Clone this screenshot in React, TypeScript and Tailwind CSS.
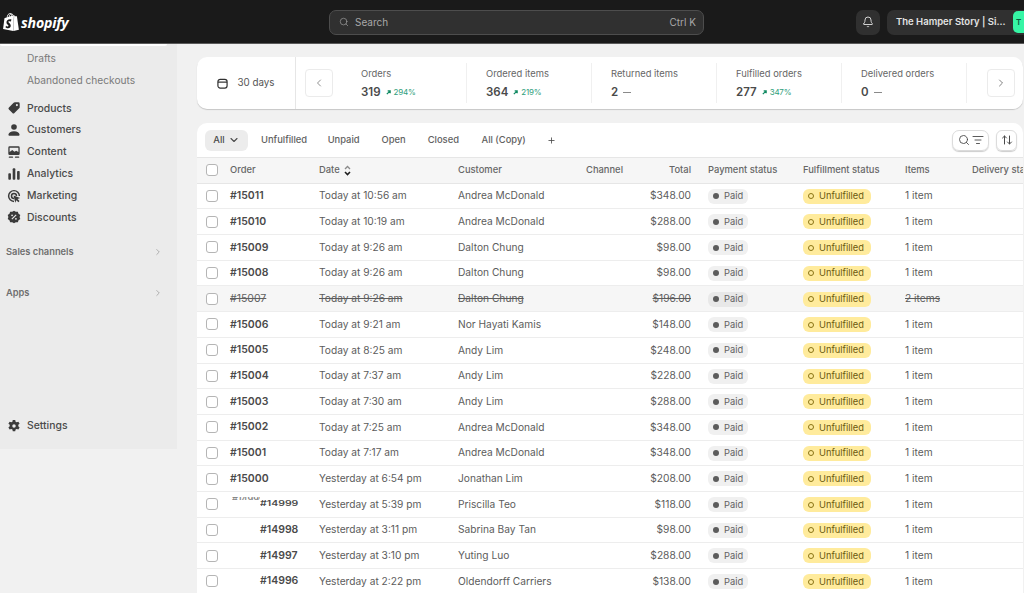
import { ArrowUpDown, Bell, ChevronDown, ChevronLeft, ChevronRight, ListFilter, Plus, Search } from "lucide-react";
import { SiShopify } from "react-icons/si";
import type { ReactNode } from "react";

const orders = [
  { id: "#15011", date: "Today at 10:56 am", customer: "Andrea McDonald", total: "$348.00", items: "1 item" },
  { id: "#15010", date: "Today at 10:19 am", customer: "Andrea McDonald", total: "$288.00", items: "1 item" },
  { id: "#15009", date: "Today at 9:26 am", customer: "Dalton Chung", total: "$98.00", items: "1 item" },
  { id: "#15008", date: "Today at 9:26 am", customer: "Dalton Chung", total: "$98.00", items: "1 item" },
  { id: "#15007", date: "Today at 9:26 am", customer: "Dalton Chung", total: "$196.00", items: "2 items", voided: true },
  { id: "#15006", date: "Today at 9:21 am", customer: "Nor Hayati Kamis", total: "$148.00", items: "1 item" },
  { id: "#15005", date: "Today at 8:25 am", customer: "Andy Lim", total: "$248.00", items: "1 item" },
  { id: "#15004", date: "Today at 7:37 am", customer: "Andy Lim", total: "$228.00", items: "1 item" },
  { id: "#15003", date: "Today at 7:30 am", customer: "Andy Lim", total: "$288.00", items: "1 item" },
  { id: "#15002", date: "Today at 7:25 am", customer: "Andrea McDonald", total: "$348.00", items: "1 item" },
  { id: "#15001", date: "Today at 7:17 am", customer: "Andrea McDonald", total: "$348.00", items: "1 item" },
  { id: "#15000", date: "Yesterday at 6:54 pm", customer: "Jonathan Lim", total: "$208.00", items: "1 item" },
  { id: "#14999", date: "Yesterday at 5:39 pm", customer: "Priscilla Teo", total: "$118.00", items: "1 item", shifted: true, glitch: true },
  { id: "#14998", date: "Yesterday at 3:11 pm", customer: "Sabrina Bay Tan", total: "$98.00", items: "1 item", shifted: true },
  { id: "#14997", date: "Yesterday at 3:10 pm", customer: "Yuting Luo", total: "$288.00", items: "1 item", shifted: true },
  { id: "#14996", date: "Yesterday at 2:22 pm", customer: "Oldendorff Carriers", total: "$138.00", items: "1 item", shifted: true },
];

const stats = [
  { label: "Orders", value: "319", delta: "294%" },
  { label: "Ordered items", value: "364", delta: "219%" },
  { label: "Returned items", value: "2" },
  { label: "Fulfilled orders", value: "277", delta: "347%" },
  { label: "Delivered orders", value: "0" },
];

const iconProps = { width: 14, height: 14, viewBox: "0 0 16 16", fill: "#3b3b3b" };

const navIcons: Record<string, ReactNode> = {
  Products: (
    <svg {...iconProps}>
      <path d="M9 1.5h4a1.5 1.5 0 0 1 1.5 1.5v4a2 2 0 0 1-.6 1.4l-5.4 5.4a1.6 1.6 0 0 1-2.3 0L2.200 9.800a1.600 1.600 0 0 1 0-2.300l5.400-5.400A2 2 0 0 1 9 1.500zm2.300 2a1.200 1.200 0 1 0 0 2.400 1.200 1.200 0 0 0 0-2.400z" fillRule="evenodd" />
    </svg>
  ),
  Customers: (
    <svg {...iconProps}>
      <circle cx="8" cy="4.500" r="3.200" />
      <path d="M2.500 14.500c-.600 0-1-.500-.9-1 .4-2.500 2.700-4 6.400-4s6 1.500 6.400 4c.1.500-.3 1-.9 1z" />
    </svg>
  ),
  Content: (
    <svg {...iconProps}>
      <path d="M3 1.500h10A1.500 1.500 0 0 1 14.500 3v7a1.500 1.500 0 0 1-1.500 1.500H3A1.500 1.500 0 0 1 1.500 10V3A1.500 1.500 0 0 1 3 1.500zm0 1.500v5l3-2.200 2.500 2 2-1.300 2.500 1.500V3z" fillRule="evenodd" />
      <rect x="2" y="13" width="5" height="1.700" rx=".8" />
      <rect x="9" y="13" width="5" height="1.700" rx=".8" />
    </svg>
  ),
  Analytics: (
    <svg {...iconProps}>
      <rect x="1.500" y="7" width="3" height="7.500" rx="1" />
      <rect x="6.500" y="1.500" width="3" height="13" rx="1" />
      <rect x="11.500" y="4.500" width="3" height="10" rx="1" />
    </svg>
  ),
  Marketing: (
    <svg {...iconProps}>
      <path d="M8 1a7 7 0 0 1 7 7h-1.700A5.300 5.300 0 1 0 8 13.300V15A7 7 0 0 1 8 1z" />
      <path d="M8 4.300A3.700 3.700 0 0 1 11.700 8H10a2 2 0 1 0-2 2v1.700A3.700 3.700 0 0 1 8 4.300z" />
      <path d="M7.500 7.500l7.500 2.700-3 1.300 2.300 2.300-1.300 1.300-2.300-2.300-1.300 3z" />
    </svg>
  ),
  Discounts: (
    <svg {...iconProps}>
      <path d="M8 .8l2 1.300 2.400-.2.800 2.300 2 1.400-.8 2.400.8 2.400-2 1.400-.8 2.300-2.400-.2-2 1.300-2-1.300-2.400.2-.8-2.300-2-1.400.8-2.400-.8-2.400 2-1.400.8-2.300 2.400.2z" />
      <path d="M5.500 10.500l5-5" stroke="#ebebeb" strokeWidth="1.300" />
      <circle cx="5.800" cy="6" r="1" fill="#ebebeb" />
      <circle cx="10.200" cy="10" r="1" fill="#ebebeb" />
    </svg>
  ),
  Settings: (
    <svg {...iconProps}>
      <path d="M6.600 1h2.800l.4 2 1.300.7 1.900-.7 1.400 2.400-1.500 1.300v1.600l1.500 1.300-1.400 2.400-1.900-.7-1.300.7-.4 2H6.600l-.4-2-1.300-.7-1.900.7-1.400-2.400 1.500-1.300V6.700L1.600 5.400 3 3l1.900.7L6.200 3zM8 6a2 2 0 1 0 0 4 2 2 0 0 0 0-4z" fillRule="evenodd" />
    </svg>
  ),
};

function NavItem({ label }: { label: string }) {
  return (
    <div className="flex h-[21.800px] items-center">
      <span className="flex w-[27px] shrink-0 justify-center">{navIcons[label]}</span>
      <span className="text-[10.400px] font-medium text-[#4a4a4a]">{label}</span>
    </div>
  );
}

function SectionLink({ label }: { label: string }) {
  return (
    <div className="flex h-[20px] items-center justify-between pl-[6px] pr-[14px]">
      <span className="text-[9.300px] font-semibold text-[#6f6f6f]">{label}</span>
      <ChevronRight size={10} strokeWidth={1.500} className="text-[#8a8a8a]" />
    </div>
  );
}

function Checkbox() {
  return <span className="block h-[12px] w-[12px] rounded-[3px] border border-[#b5b5b5] bg-white" />;
}

function Delta({ value }: { value: string }) {
  return (
    <span className="flex items-center gap-[3px] text-[8px] tracking-[-0.2px] text-[#2f9e7c]">
      <svg width="5" height="5" viewBox="0 0 6 6" fill="none" stroke="#108a62" strokeWidth="1.500">
        <path d="M1 5l4-4M2 1h3v3" />
      </svg>
      {value}
    </span>
  );
}

const rowGrid = "grid h-[25.700px] grid-cols-[33px_89px_139px_128px_64px_41px_17px_95px_102px_1fr] items-center";

function OrderRow({ order }: { order: (typeof orders)[number] }) {
  const strike = order.voided ? "line-through" : "";
  return (
    <div className={`${rowGrid} border-b border-[#ededed] text-[10.200px] text-[#5c5c5c] ${order.voided ? "bg-[#f6f6f6]" : "bg-white"}`}>
      <span className="pl-[9px]">
        <Checkbox />
      </span>
      <span className={`relative ${order.voided ? "font-normal text-[#616161] line-through" : "font-semibold text-[#4a4a4a]"} ${order.shifted ? "pl-[30px]" : ""} text-[10.500px]`}>
        {order.glitch && (
          <span className="absolute left-[2px] top-[1px] h-[3px] w-[28px] overflow-hidden text-[9px] leading-[3px] text-[#888]">#14999</span>
        )}
        <span className={order.glitch ? "inline-block scale-y-[0.75]" : ""}>{order.id}</span>
      </span>
      <span className={strike}>{order.date}</span>
      <span className={strike}>{order.customer}</span>
      <span />
      <span className={`text-right ${strike}`}>{order.total}</span>
      <span />
      <span>
        <span className={`inline-flex h-[15px] items-center gap-[5px] rounded-[6px] pl-[5px] pr-[5px] text-[9.300px] text-[#616161] ${order.voided ? "bg-[#e8e8e8]" : "bg-[#f0f0f0]"}`}>
          <span className="h-[6px] w-[6px] rounded-full bg-[#5c5c5c]" />
          Paid
        </span>
      </span>
      <span>
        <span className="inline-flex h-[15px] items-center gap-[5px] rounded-[6px] bg-[#ffeb9c] pl-[5px] pr-[7px] text-[9.300px] text-[#6b5a10]">
          <span className="h-[6px] w-[6px] rounded-full border border-[#8a7414]" />
          Unfulfilled
        </span>
      </span>
      <span className={strike}>{order.items}</span>
    </div>
  );
}

export default function App() {
  return (
    <div className="flex h-screen flex-col overflow-hidden bg-[#f1f1f1] font-['Inter',sans-serif]">
      <header className="flex h-[44px] shrink-0 items-center border-b border-[#5a5a5a] bg-[#1a1a1a] pt-[1px]">
        <div className="flex w-[329px] shrink-0 items-center gap-[1px] pl-[2px] pt-[1px] text-white">
          <SiShopify size={18} />
          <span className="font-['Open_Sans',sans-serif] text-[14.200px] font-bold italic tracking-[-0.2px]">shopify</span>
        </div>
        <div className="flex h-[25px] w-[375px] shrink-0 items-center justify-between rounded-[7px] border border-[#4d4d4d] bg-[#303030] pl-[9px] pr-[7px] text-[10px] text-[#a8a8a8]">
          <span className="flex items-center gap-[6px]">
            <Search size={10} strokeWidth={1.500} />
            Search
          </span>
          <span>Ctrl K</span>
        </div>
        <span className="ml-[152px] flex h-[25px] w-[24px] shrink-0 items-center justify-center rounded-[7px] bg-[#303030] text-[#e3e3e3]">
          <Bell size={12} strokeWidth={1.800} />
        </span>
        <div className="ml-[7px] flex h-[25px] flex-1 items-center justify-between overflow-hidden rounded-l-[7px] bg-[#303030] pl-[9px]">
          <span className="whitespace-nowrap text-[9.500px] font-semibold text-[#e3e3e3]">The Hamper Story | Si...</span>
          <span className="flex h-[22px] w-[11px] items-center rounded-l-[5px] bg-[#36f5a5] pl-[3px] text-[8px] font-semibold text-[#0b5c3f]">T</span>
        </div>
      </header>

      <div className="flex min-h-0 flex-1">
        <aside className="flex h-[405px] w-[177px] shrink-0 flex-col bg-[#ebebeb]">
          <div className="h-[2px] w-[167px] rounded-b-[4px] bg-white" />
          <div className="pl-[27px] pt-[2px] text-[10.200px] text-[#7a7a7a]">
            <div className="flex h-[22px] items-center">Drafts</div>
            <div className="flex h-[22px] items-center">Abandoned checkouts</div>
          </div>
          <div className="mt-[5.500px]">
            {["Products", "Customers", "Content", "Analytics", "Marketing", "Discounts"].map((label) => (
              <NavItem key={label} label={label} />
            ))}
          </div>
          <div className="mt-[13.500px]">
            <SectionLink label="Sales channels" />
          </div>
          <div className="mt-[21px]">
            <SectionLink label="Apps" />
          </div>
          <div className="mt-[112.500px]">
            <NavItem label="Settings" />
          </div>
        </aside>

        <main className="min-w-0 flex-1 pl-[20px] pr-[1px] pt-[13px]">
          <section className="flex h-[52px] items-center rounded-[10px] bg-white shadow-[0_1px_1px_rgba(0,0,0,0.18)]">
            <div className="flex h-full w-[99px] shrink-0 items-center justify-center gap-[9px] border-r border-[#e6e6e6] text-[9.800px] text-[#555]">
              <svg width="11" height="11" viewBox="0 0 12 12" fill="none" stroke="#303030" strokeWidth="1.300">
                <rect x="1" y="1.500" width="10" height="9.500" rx="2.500" />
                <path d="M1 4.500h10" />
              </svg>
              30 days
            </div>
            <button className="ml-[9px] flex h-[28px] w-[28px] shrink-0 items-center justify-center rounded-[4px] border border-[#ebebeb] text-[#6b6b6b]">
              <ChevronLeft size={12} strokeWidth={1.500} />
            </button>
            <div className="flex h-[40px] w-[634px] shrink-0">
              {stats.map((stat) => (
                <div key={stat.label} className="flex w-[125px] shrink-0 flex-col justify-center gap-[4px] border-r border-[#f0f0f0] pl-[19px] first:w-[134px] first:pl-[28px]">
                  <span className="text-[9.400px] text-[#666]">{stat.label}</span>
                  <span className="flex items-center gap-[5px]">
                    <span className="text-[11.500px] font-semibold leading-[14px] text-[#4a4a4a]">{stat.value}</span>
                    {stat.delta ? <Delta value={stat.delta} /> : <span className="h-[1px] w-[8px] bg-[#8a8a8a]" />}
                  </span>
                </div>
              ))}
            </div>
            <button className="ml-[20px] flex h-[28px] w-[28px] shrink-0 items-center justify-center rounded-[4px] border border-[#ebebeb] text-[#555]">
              <ChevronRight size={12} strokeWidth={1.500} />
            </button>
          </section>

          <section className="mt-[14px] overflow-hidden rounded-t-[10px] bg-white">
            <div className="flex h-[35px] items-center justify-between border-b border-[#e6e6e6] pl-[8px] pr-[6px]">
              <div className="flex items-center text-[9.400px] font-medium text-[#616161]">
                <span className="flex h-[21px] w-[43px] items-center justify-center gap-[3px] rounded-[6px] bg-[#ececec] text-[#4a4a4a]">
                  All
                  <ChevronDown size={12} strokeWidth={2.200} />
                </span>
                <span className="ml-[13px]">Unfulfilled</span>
                <span className="ml-[20.500px]">Unpaid</span>
                <span className="ml-[22px]">Open</span>
                <span className="ml-[22px]">Closed</span>
                <span className="ml-[22.500px]">All (Copy)</span>
                <Plus size={9} strokeWidth={2.200} className="ml-[21.500px] text-[#4a4a4a]" />
              </div>
              <div className="flex items-center gap-[7px] text-[#4a4a4a]">
                <span className="flex h-[21px] w-[37px] items-center justify-center gap-[2px] rounded-[7px] border border-[#dcdcdc] shadow-[0_1px_1px_rgba(0,0,0,0.2)]">
                  <Search size={12} strokeWidth={1.800} />
                  <ListFilter size={12} strokeWidth={1.800} />
                </span>
                <span className="flex h-[21px] w-[21px] items-center justify-center rounded-[6px] border border-[#dcdcdc] shadow-[0_1px_1px_rgba(0,0,0,0.2)]">
                  <ArrowUpDown size={12} strokeWidth={2} />
                </span>
              </div>
            </div>

            <div className={`${rowGrid} whitespace-nowrap border-b border-[#e6e6e6] bg-[#f6f6f6] text-[9.400px] font-medium text-[#666]`}>
              <span className="pl-[9px]">
                <Checkbox />
              </span>
              <span>Order</span>
              <span className="flex items-center gap-[3px]">
                Date
                <svg width="9" height="11" viewBox="0 0 9 11" fill="none" strokeWidth="1.300">
                  <path d="M2 4l2.500-2.500L7 4" stroke="#8a8a8a" />
                  <path d="M2 7l2.500 2.500L7 7" stroke="#1f1f1f" strokeWidth="1.600" />
                </svg>
              </span>
              <span>Customer</span>
              <span>Channel</span>
              <span className="text-right">Total</span>
              <span />
              <span>Payment status</span>
              <span>Fulfillment status</span>
              <span className="relative">
                Items
                <span className="absolute left-[67px] top-0">Delivery status</span>
              </span>
            </div>

            {orders.map((order) => (
              <OrderRow key={order.id} order={order} />
            ))}
          </section>
        </main>
      </div>
    </div>
  );
}
